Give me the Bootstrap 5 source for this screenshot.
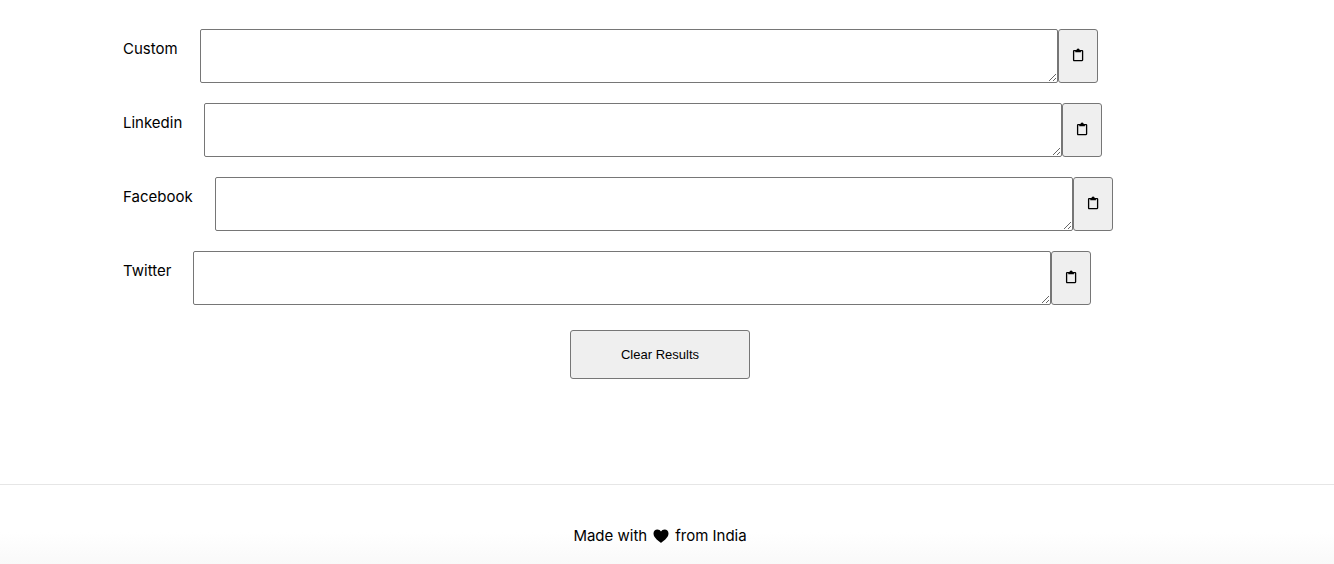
<!DOCTYPE html>
<html lang="en">
<head>
<meta charset="utf-8">
<meta name="viewport" content="width=device-width, initial-scale=1">
<title>Link results</title>
<link href="https://cdn.jsdelivr.net/npm/bootstrap@5.3.0/dist/css/bootstrap.min.css" rel="stylesheet">
<style>
  body { font: 15px/24px Inter, sans-serif; color: #000; background: #fff; }
  .page-inset { padding-right: 14px; }
  .results { padding-top: 29px; gap: 20px; }
  .result-label { margin: 8px 22px 0 123px; }
  .result-text { width: 65%; height: 54px; padding: 2px; resize: both; background: #fff; border: 1px solid #767676; border-radius: 2px; }
  .plain-btn { background: #efefef; color: #000; border: 1px solid #767676; border-radius: 3px; padding: 0; }
  .copy-btn { width: 40px; height: 54px; padding-bottom: 3px; }
  .clear-btn { width: 180px; height: 49px; margin-top: 25px; font: 13px/16px "Liberation Sans", sans-serif; }
  .page-footer { margin-top: 105px; padding-top: 39px; padding-bottom: 16px; border-top: 1px solid #e6e6e6; background: linear-gradient(#fff 60%, #f9f9f9); }
  .heart { margin: 0 6px; }
</style>
</head>
<body>
<svg class="d-none" aria-hidden="true">
  <symbol id="clipboard" viewBox="0 0 12 14">
    <rect x="1.600" y="2.600" width="9" height="10" rx=".5" fill="none" stroke="#000" stroke-width="1.300"/>
    <path d="M3.300 2h1.200a1.600 1.600 0 0 1 3.200 0h1.200v2.300H3.300z" fill="#000"/>
  </symbol>
</svg>
<main class="page-inset">
  <form>
    <div class="results d-flex flex-column">
      <div class="d-flex align-items-start">
        <label class="result-label" for="custom">Custom</label>
        <textarea class="result-text" id="custom"></textarea>
        <button type="button" class="plain-btn copy-btn d-flex align-items-center justify-content-center" aria-label="Copy Custom"><svg width="12" height="14"><use href="#clipboard"/></svg></button>
      </div>
      <div class="d-flex align-items-start">
        <label class="result-label" for="linkedin">Linkedin</label>
        <textarea class="result-text" id="linkedin"></textarea>
        <button type="button" class="plain-btn copy-btn d-flex align-items-center justify-content-center" aria-label="Copy Linkedin"><svg width="12" height="14"><use href="#clipboard"/></svg></button>
      </div>
      <div class="d-flex align-items-start">
        <label class="result-label" for="facebook">Facebook</label>
        <textarea class="result-text" id="facebook"></textarea>
        <button type="button" class="plain-btn copy-btn d-flex align-items-center justify-content-center" aria-label="Copy Facebook"><svg width="12" height="14"><use href="#clipboard"/></svg></button>
      </div>
      <div class="d-flex align-items-start">
        <label class="result-label" for="twitter">Twitter</label>
        <textarea class="result-text" id="twitter"></textarea>
        <button type="button" class="plain-btn copy-btn d-flex align-items-center justify-content-center" aria-label="Copy Twitter"><svg width="12" height="14"><use href="#clipboard"/></svg></button>
      </div>
    </div>
    <div class="text-center">
      <button type="reset" class="plain-btn clear-btn">Clear Results</button>
    </div>
  </form>
</main>
<footer class="page-footer page-inset d-flex justify-content-center align-items-center">
  <span>Made with</span>
  <svg class="heart" width="16" height="14" viewBox="0 0 16 14" role="img" aria-label="love"><path d="M8 14C6.500 12.500 .5 9 .5 4.500.5 2 2.300.5 4.300.5 6 .5 7.300 1.300 8 2.500 8.700 1.300 10 .5 11.700.5c2 0 3.800 1.500 3.800 4C15.500 9 9.500 12.500 8 14z"/></svg>
  <span>from India</span>
</footer>
<script src="https://cdn.jsdelivr.net/npm/bootstrap@5.3.0/dist/js/bootstrap.bundle.min.js"></script>
</body>
</html>
